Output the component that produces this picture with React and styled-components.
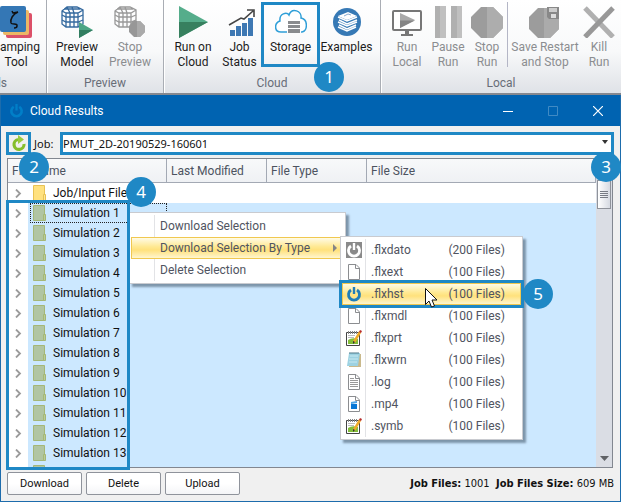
import styled, { createGlobalStyle, css } from "styled-components";

const GlobalStyles = createGlobalStyle`
  * {
    box-sizing: border-box;
  }

  body {
    margin: 0;
    overflow: hidden;
    font-family: Roboto, "Noto Sans", sans-serif;
    font-size: 12px;
    color: #111;
  }

  button, select {
    font-family: inherit;
    font-size: inherit;
    color: inherit;
  }
`;

const Page = styled.div`
  display: flex;
  flex-direction: column;
  height: 100vh;
`;

/* Ribbon */

const Ribbon = styled.header`
  display: flex;
  flex: none;
  height: 95px;
  border-bottom: 2px solid #85888f;
  background: linear-gradient(#ffffff, #f8f9fa 55%, #dfe2e7);
`;

const Group = styled.section`
  display: flex;
  flex-direction: column;
  flex: ${(props) => (props.$grow ? "1" : "none")};
  width: ${(props) => props.$width};
  overflow: ${(props) => (props.$clip ? "hidden" : "visible")};
  border-right: ${(props) => (props.$grow ? "none" : "1px solid #a9adb4")};
  box-shadow: ${(props) => (props.$grow ? "none" : "1px 0 #fff")};
`;

const Tools = styled.div`
  display: flex;
  height: 74px;
  padding-top: 2px;
  padding-left: ${(props) => props.$start || "4px"};
  margin-left: ${(props) => (props.$clip ? "-14px" : "0")};
`;

const ToolButton = styled.button`
  position: relative;
  display: flex;
  flex-direction: column;
  align-items: center;
  flex: none;
  width: ${(props) => props.$width};
  height: 65px;
  padding: 4px 0 0;
  border: none;
  background: none;
  line-height: 15px;
  white-space: nowrap;
  color: ${(props) => (props.disabled ? "#8b8d90" : "#1c1c1c")};
  outline: ${(props) => (props.$marked ? "3px solid #1f88c5" : "none")};
  outline-offset: -3px;

  svg {
    flex: none;
    margin-bottom: 2px;
  }
`;

const ToolDivider = styled.div`
  width: 1px;
  height: 65px;
  background-color: #b4b6c6;
`;

const GroupLabel = styled.div`
  display: flex;
  justify-content: ${(props) => (props.$inset ? "flex-end" : "center")};
  padding-right: ${(props) => props.$inset || "0"};
  line-height: 18px;
  color: #686d78;
`;

/* Dialog window */

const Dialog = styled.main`
  display: flex;
  flex-direction: column;
  flex: 1;
  min-height: 0;
  border: 1px solid #1d6cac;
  border-top: none;
  background-color: #f0f0f0;
`;

const TitleBar = styled.div`
  display: flex;
  align-items: center;
  flex: none;
  height: 31px;
  padding-left: 8px;
  background-color: #0063b1;
  color: #fff;
`;

const Title = styled.h1`
  flex: 1;
  margin: 0 0 0 6px;
  font-size: 12px;
  font-weight: 400;
`;

const WindowButton = styled.button`
  display: grid;
  place-items: center;
  width: 45px;
  height: 31px;
  padding: 0;
  border: none;
  background: none;
  opacity: ${(props) => (props.disabled ? "0.25" : "1")};
`;

const JobBar = styled.div`
  display: flex;
  align-items: center;
  flex: none;
  padding: 6px 6px 3px 5px;
  font-family: "Noto Sans", sans-serif;
  font-size: 11px;
`;

const RefreshButton = styled.button`
  position: relative;
  display: grid;
  place-items: center;
  width: 25px;
  height: 23px;
  padding: 0;
  border: 3px solid #1f88c5;
  background: none;
`;

const JobLabel = styled.label`
  width: 29px;
  padding-left: 3px;
  white-space: nowrap;
`;

const SelectWrap = styled.div`
  position: relative;
  display: flex;
  flex: 1;
`;

const JobSelect = styled.select`
  appearance: none;
  width: 100%;
  height: 23px;
  padding: 0;
  border: 3px solid #1f88c5;
  border-radius: 0;
  background-color: #fff;
`;

const SelectArrow = styled.svg`
  position: absolute;
  top: 8px;
  right: 6px;
  pointer-events: none;
`;

/* Results table */

const PanelWrap = styled.div`
  position: relative;
  flex: 1;
  min-height: 0;
  margin: 0 7px 0 6px;
`;

const Panel = styled.div`
  display: flex;
  height: 100%;
  overflow: hidden;
  border: 1px solid #828790;
  background-color: #fff;
`;

const TableArea = styled.div`
  flex: 1;
  overflow: hidden;
`;

const Table = styled.table`
  width: 100%;
  table-layout: fixed;
  border-collapse: separate;
  border-spacing: 0;
`;

const HeadCell = styled.th`
  width: ${(props) => props.$width};
  height: 24px;
  padding: 0 0 0 4px;
  border-right: 1px solid #a3a9b4;
  border-bottom: 1px solid #a3a9b4;
  background: linear-gradient(#f8f9fa, #eff1f4);
  font-weight: 400;
  text-align: left;
  color: #4c5360;
`;

const Cell = styled.td`
  height: 20px;
  padding: 0;
  background-color: ${(props) => (props.$selected ? "#cce8ff" : "#fff")};
`;

const NameCell = styled.div`
  display: flex;
  align-items: center;
  height: 20px;
`;

const Expander = styled.button`
  display: grid;
  place-items: center;
  width: 20px;
  height: 20px;
  padding: 0;
  border: none;
  background-color: #fff;
`;

const Entry = styled.span`
  display: flex;
  align-items: center;
  gap: 7px;
  flex: 1;
  height: 20px;
  margin-left: 2px;
  padding-left: 2px;
  border: 1px ${(props) => (props.$focused ? "dotted #222" : "solid transparent")};
  line-height: 18px;
  white-space: nowrap;
`;

const Scrollbar = styled.div`
  display: flex;
  flex-direction: column;
  flex: none;
  width: 16px;
  padding: 0 1px 0 1px;
  background-color: #dadde4;
`;

const Thumb = styled.div`
  display: grid;
  place-items: center;
  height: 29px;
  margin-top: 21px;
  border: 1px solid #8f939b;
  background: linear-gradient(90deg, #fff, #d6dae2);
`;

const ScrollDown = styled.button`
  display: grid;
  place-items: center;
  height: 18px;
  margin-top: auto;
  padding: 0;
  border: none;
  background: none;
`;

/* Menus lie over the table */

const Menu = styled.ul`
  position: absolute;
  margin: 0;
  padding: 2px 1px;
  list-style: none;
  border: 1px solid #c9cbd0;
  background-color: #fff;
  box-shadow: 3px 3px 2px rgba(60, 80, 100, 0.55);
`;

const ContextMenu = styled(Menu)`
  top: 54px;
  left: 122px;
  width: 217px;
`;

const SubMenu = styled(Menu)`
  top: 78px;
  left: 333px;
  width: 183px;
`;

const highlight = css`
  border-color: #f0c850;
  background: linear-gradient(#fffbe6, #ffe88f 45%, #ffe17c 60%, #fff6cf);
`;

const MenuItem = styled.button`
  position: relative;
  display: flex;
  align-items: center;
  width: 100%;
  height: 22px;
  padding: 0 15px 0 0;
  border: 1px solid transparent;
  background: none;
  color: #505461;
  white-space: nowrap;
  ${(props) => props.$active && highlight}
  ${(props) =>
    props.$marked &&
    css`
      outline: 3px solid #1f88c5;
      z-index: 1;
    `}
`;

const MenuIcon = styled.span`
  display: grid;
  place-items: center;
  width: 23px;
  height: 22px;
  margin-right: 5px;
  border-right: 1px solid ${(props) => (props.$bare ? "transparent" : "#e2e3e6")};
`;

const MenuText = styled.span`
  flex: 1;
  text-align: left;
`;

const SubArrow = styled.svg`
  position: absolute;
  right: 5px;
`;

const Pointer = styled.svg`
  position: absolute;
  top: 51px;
  left: 84px;
  z-index: 2;
`;

const TreeMark = styled.div`
  position: absolute;
  top: 42px;
  bottom: -2px;
  left: -1px;
  width: 124px;
  border: 3px solid #1f88c5;
  pointer-events: none;
`;

const Badge = styled.span`
  position: absolute;
  top: ${(props) => props.$top};
  left: ${(props) => props.$left};
  right: ${(props) => props.$right};
  z-index: 3;
  display: grid;
  place-items: center;
  width: 30px;
  height: 30px;
  border-radius: 50%;
  background-color: #1f88c5;
  color: #fff;
  font-family: "Noto Sans", sans-serif;
  font-size: 17px;
  line-height: 30px;
`;

const Footer = styled.footer`
  display: flex;
  align-items: center;
  flex: none;
  gap: 4px;
  padding: 4px 6px 6px 6px;
  font-size: 11px;
`;

const FooterButton = styled.button`
  width: 75px;
  height: 23px;
  padding: 0;
  border: 1px solid #8f939b;
  border-radius: 2px;
  background: linear-gradient(#fff 50%, #f4f5f7);
`;

const Totals = styled.p`
  margin: 0 0 0 auto;
  font-family: "DejaVu Sans Condensed", "DejaVu Sans", sans-serif;
  font-size: 11px;
  white-space: pre;
`;

/* Icons */

const DampingIcon = () => (
  <svg width="32" height="32" viewBox="0 0 32 32">
    <rect x="6" y="7" width="26" height="25" rx="2" fill="#dc5068" />
    <rect x="3" y="4" width="26" height="25" rx="2" fill="#ecb765" />
    <rect width="26" height="26" rx="2" fill="#3477b5" />
    <path
      d="M12 5L13 7L18 6C13 8 10 13 11 17C12 19 18 17 17 20C17 21 16 22 14 22"
      fill="none"
      stroke="#111"
      strokeWidth="1.500"
    />
  </svg>
);

const CageIcon = ({ gray }) => (
  <svg width="32" height="32" viewBox="0 0 32 32">
    <g fill="none" stroke={gray ? "#999" : "#34699e"} strokeWidth="1.3">
      <path d="M1 5L6 1H16L22 4V18L17 21H5L1 18zM1 5L5 7H17L22 4M5 7V21M9 7V21M13 7V21M17 7V21M6 1L9 7M11 1L13 7M3 3H19" />
      <path d="M1 9L5 11H17L22 9M1 14L5 16H17L22 14" />
    </g>
    {gray ? (
      <>
        <path d="M19 15h7l5 5v6l-5 5h-6l-5-5v-6z" fill="#979797" />
        <path d="M23 15h3l5 5v6l-5 5h-3z" fill="#aaa" />
      </>
    ) : (
      <>
        <path d="M18 16L32 24L18 32z" fill="#4ba585" />
        <path d="M18 24H32L18 32z" fill="#317d60" />
      </>
    )}
  </svg>
);

const RunIcon = () => (
  <svg width="32" height="32" viewBox="0 0 32 32">
    <path d="M2 0L31 16L2 32z" fill="#55ad8b" />
    <path d="M2 16H31L2 32z" fill="#37805f" />
  </svg>
);

const StatusIcon = () => (
  <svg width="32" height="32" viewBox="0 0 32 32">
    <path d="M6 24h5v6H6zM12 20h5v10h-5zM18 17h5v13h-5zM24 12h5v18h-5z" fill="#3e78b3" />
    <path d="M5 19L17 12L20 13L29 5M23 4h7v7" fill="none" stroke="#454545" strokeWidth="1.6" />
  </svg>
);

const StorageIcon = () => (
  <svg width="32" height="32" viewBox="0 0 32 32">
    <path
      d="M12 26H6C-1 26-1 17 5 15C4 7 12 6 14 9C17 1 27 5 26 12C33 13 33 25 27 26H26"
      fill="#fff"
      stroke="#2f9fd8"
      strokeWidth="1.5"
    />
    <path d="M13 15h12v3H13zM13 19h12v3H13zM13 23h12v4H13z" fill="#898b8e" />
  </svg>
);

const ExamplesIcon = () => (
  <svg width="32" height="32" viewBox="0 0 32 32">
    <circle cx="16" cy="16" r="14" fill="#3679b5" />
    <path d="M7 10L17 6L26 10L16 14z" fill="#fff" />
    <path
      d="M7 11L16 15L26 11M8 14L16 18L26 14M7 16L16 20L26 16M8 19L16 23L25 19M7 21L16 25L25 21"
      fill="none"
      stroke="#fff"
      strokeWidth="1.4"
    />
    <path d="M13 10L17 8L20 9" fill="none" stroke="#8aabd0" />
  </svg>
);

const RunLocalIcon = () => (
  <svg width="32" height="32" viewBox="0 0 32 32">
    <rect x="2" y="5" width="28" height="19" rx="1" fill="#fff" stroke="#777" strokeWidth="2" />
    <path d="M14 24h4v4h4v2H10v-2h4z" fill="#777" />
    <path d="M9 7L24 14L9 22z" fill="#aaa" />
    <path d="M9 14.500H24L9 22z" fill="#858585" />
  </svg>
);

const PauseIcon = () => (
  <svg width="32" height="32" viewBox="0 0 32 32">
    <path d="M3 0h11v32H3zM19 0h11v32H19z" fill="#b0b0b0" />
    <path d="M8 0h6v32H8zM25 0h5v32H25z" fill="#c0c0c0" />
  </svg>
);

const StopIcon = () => (
  <svg width="32" height="32" viewBox="0 0 32 32">
    <path d="M10 1h12l10 10v11L22 32H10L0 22V11z" fill="#9c9c9c" />
    <path d="M16 1h6l10 10v11L22 32h-6z" fill="#adadad" />
  </svg>
);

const SaveStopIcon = () => (
  <svg width="32" height="32" viewBox="0 0 32 32">
    <path d="M9 2h11l10 9v12l-9 9H9L0 23V11z" fill="#9c9c9c" />
    <path d="M15 2h5l10 9v12l-9 9h-6z" fill="#ababab" />
    <path d="M18 1h12v12H20l-2-2z" fill="#888" />
    <path d="M20 2h8v4h-8z" fill="#ccc" />
    <path d="M22 8h5v4h-5z" fill="#ddd" />
  </svg>
);

const KillIcon = () => (
  <svg width="32" height="32" viewBox="0 0 32 32">
    <path d="M2 2L30 31" stroke="#b0b0b0" strokeWidth="5" />
    <path d="M30 2L2 31" stroke="#989898" strokeWidth="5" />
  </svg>
);

const PowerIcon = ({ color, tile, size = 16 }) => (
  <svg width={size} height={size} viewBox="0 0 16 16">
    {tile && <rect width="16" height="16" fill="#8a8a8a" />}
    <path d="M5 4A5.500 5.500 0 1 0 11 4" fill="none" stroke={color} strokeWidth="2.800" />
    <path d="M8 1V8" stroke={color} strokeWidth="2.400" />
  </svg>
);

const RefreshIcon = () => (
  <svg width="17" height="17" viewBox="0 0 17 17">
    <path d="M8 4.500A5 5 0 1 0 14 9" fill="none" stroke="#86be2b" strokeWidth="3.200" />
    <path d="M8 0L14 4.500L8 9z" fill="#9acb3e" />
  </svg>
);

const PageIcon = ({ kind }) => (
  <svg width="16" height="16" viewBox="0 0 16 16">
    <path d="M2.500 .5H10L13.500 4V15.500H2.500z" fill="#fff" stroke="#8b8d90" />
    <path d="M9.500 .5V4.500H13.500" fill="none" stroke="#8b8d90" />
    {kind === "log" && <path d="M4 4.500H8M4 6.500H12M4 8.500H12M4 10.500H12M4 12.500H12" stroke="#999" />}
    {kind === "video" && (
      <>
        <path d="M5 8h6v5H5z" fill="#0878d7" />
        <path d="M5 6L11 5V7L5 8z" fill="#50a5e6" />
      </>
    )}
  </svg>
);

const EditIcon = () => (
  <svg width="16" height="16" viewBox="0 0 16 16">
    <path d="M.5 2.500H13.500V15.500H.5z" fill="#fff" stroke="#444" />
    <path d="M2 10Q6 7 12 9V14H2z" fill="#83bd38" />
    <path d="M2 5.500H9M2 7.500H8" stroke="#bbb" />
    <path d="M2.500 1V4M4.500 1V4M6.500 1V4M8.500 1V4M10.500 1V4" stroke="#888" />
    <path d="M14 2L8 12" stroke="#efaa27" strokeWidth="2.500" />
    <path d="M14 0L16 1L15 3L13 2z" fill="#b72b2b" />
    <path d="M7 11L9 12L7 14z" fill="#333" />
  </svg>
);

const NotepadIcon = () => (
  <svg width="16" height="16" viewBox="0 0 16 16">
    <path d="M4 2H15V15H3z" fill="#c9b98c" />
    <path d="M3 1H14L12 14H1z" fill="#9dd2e2" />
    <path d="M4 4H12M3 7H12M3 10H11" stroke="#c8e9f1" />
    <path d="M4 0V2M6 0V2M8 0V2M10 0V2M12 0V2" stroke="#4c7787" />
  </svg>
);

const FolderIcon = ({ selected }) => (
  <svg width="13" height="16" viewBox="0 0 13 16">
    <path d="M.5 .5H11.500V15.500H.5z" fill={selected ? "#b1c5a3" : "#ffe17f"} stroke={selected ? "#a5b777" : "#e8c254"} />
    <path d="M10.500 9.500H12.500V15.500H10.500z" fill={selected ? "#b9cc9a" : "#ffe898"} stroke={selected ? "#a5b777" : "#e8c254"} />
  </svg>
);

const Chevron = () => (
  <svg width="7" height="9" viewBox="0 0 7 9">
    <path d="M1 .5L5 4.500L1 8.500" fill="none" stroke="#9b9b9b" strokeWidth="1.800" />
  </svg>
);

const files = [
  { name: ".flxdato", count: 200, icon: <PowerIcon color="#fff" tile /> },
  { name: ".flxext", count: 100, icon: <PageIcon /> },
  { name: ".flxhst", count: 100, icon: <PowerIcon color="#207eb9" />, active: true },
  { name: ".flxmdl", count: 100, icon: <PageIcon /> },
  { name: ".flxprt", count: 100, icon: <EditIcon /> },
  { name: ".flxwrn", count: 100, icon: <NotepadIcon /> },
  { name: ".log", count: 100, icon: <PageIcon kind="log" /> },
  { name: ".mp4", count: 100, icon: <PageIcon kind="video" /> },
  { name: ".symb", count: 100, icon: <EditIcon /> },
];

const rows = [
  "Job/Input Files",
  ...Array.from({ length: 14 }, (_, i) => `Simulation ${i + 1}`),
];

function Tool({ icon, lines, children, ...rest }) {
  return (
    <ToolButton {...rest}>
      {icon}
      {lines.map((line) => (
        <span key={line}>{line}</span>
      ))}
      {children}
    </ToolButton>
  );
}

function RibbonBar() {
  return (
    <Ribbon>
      <Group $width="47px" $clip>
        <Tools $clip $start="0px">
          <Tool $width="60px" icon={<DampingIcon />} lines={["Damping", "Tool"]} />
        </Tools>
        <GroupLabel $inset="39px">Tools</GroupLabel>
      </Group>
      <Group $width="117px">
        <Tools $start="5px">
          <Tool $width="50px" icon={<CageIcon />} lines={["Preview", "Model"]} />
          <Tool $width="56px" icon={<CageIcon gray />} lines={["Stop", "Preview"]} disabled />
        </Tools>
        <GroupLabel>Preview</GroupLabel>
      </Group>
      <Group $width="217px">
        <Tools>
          <Tool $width="50px" icon={<RunIcon />} lines={["Run on", "Cloud"]} />
          <Tool $width="43px" icon={<StatusIcon />} lines={["Job", "Status"]} />
          <Tool $width="59px" icon={<StorageIcon />} lines={["Storage"]} $marked>
            <Badge $top="60px" $left="53px">1</Badge>
          </Tool>
          <Tool $width="53px" icon={<ExamplesIcon />} lines={["Examples"]} />
        </Tools>
        <GroupLabel>Cloud</GroupLabel>
      </Group>
      <Group $grow>
        <Tools>
          <Tool $width="44px" icon={<RunLocalIcon />} lines={["Run", "Local"]} disabled />
          <Tool $width="38px" icon={<PauseIcon />} lines={["Pause", "Run"]} disabled />
          <Tool $width="40px" icon={<StopIcon />} lines={["Stop", "Run"]} disabled />
          <ToolDivider />
          <Tool $width="74px" icon={<SaveStopIcon />} lines={["Save Restart", "and Stop"]} disabled />
          <Tool $width="34px" icon={<KillIcon />} lines={["Kill", "Run"]} disabled />
        </Tools>
        <GroupLabel>Local</GroupLabel>
      </Group>
    </Ribbon>
  );
}

function ResultsTable() {
  return (
    <Panel>
      <TableArea>
        <Table>
          <thead>
            <tr>
              <HeadCell $width="159px">File Name</HeadCell>
              <HeadCell $width="100px">Last Modified</HeadCell>
              <HeadCell $width="100px">File Type</HeadCell>
              <HeadCell>File Size</HeadCell>
            </tr>
          </thead>
          <tbody>
            {rows.map((name, i) => (
              <tr key={name}>
                <Cell $selected={i > 0}>
                  <NameCell>
                    <Expander aria-label={`Expand ${name}`}>
                      <Chevron />
                    </Expander>
                    <Entry $focused={i === 1}>
                      <FolderIcon selected={i > 0} />
                      {name}
                    </Entry>
                  </NameCell>
                </Cell>
                <Cell $selected={i > 0} />
                <Cell $selected={i > 0} />
                <Cell $selected={i > 0} />
              </tr>
            ))}
          </tbody>
        </Table>
      </TableArea>
      <Scrollbar>
        <Thumb>
          <svg width="8" height="8" viewBox="0 0 8 8">
            <path d="M0 .5H8M0 2.500H8M0 4.500H8M0 6.500H8" stroke="#777b84" />
          </svg>
        </Thumb>
        <ScrollDown aria-label="Scroll down">
          <svg width="9" height="5" viewBox="0 0 9 5">
            <path d="M0 0H9L4.500 5z" fill="#606266" />
          </svg>
        </ScrollDown>
      </Scrollbar>
    </Panel>
  );
}

function Menus() {
  return (
    <>
      <ContextMenu>
        <li>
          <MenuItem>
            <MenuIcon />
            <MenuText>Download Selection</MenuText>
          </MenuItem>
        </li>
        <li>
          <MenuItem $active>
            <MenuIcon $bare />
            <MenuText>Download Selection By Type</MenuText>
            <SubArrow width="5" height="8" viewBox="0 0 5 8">
              <path d="M0 0L4 4L0 8z" fill="#858585" />
            </SubArrow>
          </MenuItem>
        </li>
        <li>
          <MenuItem>
            <MenuIcon />
            <MenuText>Delete Selection</MenuText>
          </MenuItem>
        </li>
      </ContextMenu>
      <SubMenu>
        {files.map((file) => (
          <li key={file.name}>
            <MenuItem $active={file.active} $marked={file.active}>
              <MenuIcon $bare={file.active}>{file.icon}</MenuIcon>
              <MenuText>{file.name}</MenuText>
              <span>({file.count} Files)</span>
              {file.active && <Badge $top="-5px" $right="-33px">5</Badge>}
            </MenuItem>
          </li>
        ))}
        <Pointer as="li" aria-hidden="true">
          <svg width="13" height="20" viewBox="0 0 13 20">
            <path d="M.5 .5V16.500L4 13L6.500 19L9.500 18L7 12H12z" fill="#fff" stroke="#111" />
          </svg>
        </Pointer>
      </SubMenu>
    </>
  );
}

function App() {
  return (
    <Page>
      <GlobalStyles />
      <RibbonBar />
      <Dialog>
        <TitleBar>
          <PowerIcon color="#007fc8" size={15} />
          <Title>Cloud Results</Title>
          <WindowButton aria-label="Minimize">
            <svg width="10" height="10" viewBox="0 0 10 10">
              <path d="M0 5.500H10" stroke="#fff" />
            </svg>
          </WindowButton>
          <WindowButton aria-label="Maximize" disabled>
            <svg width="10" height="10" viewBox="0 0 10 10">
              <path d="M.5 .5H9.500V9.500H.5z" fill="none" stroke="#fff" />
            </svg>
          </WindowButton>
          <WindowButton aria-label="Close">
            <svg width="10" height="10" viewBox="0 0 10 10">
              <path d="M0 0L10 10M10 0L0 10" stroke="#fff" strokeWidth="1.200" />
            </svg>
          </WindowButton>
        </TitleBar>
        <JobBar>
          <RefreshButton aria-label="Refresh">
            <RefreshIcon />
            <Badge $top="17px" $left="10px">2</Badge>
          </RefreshButton>
          <JobLabel htmlFor="job">Job:</JobLabel>
          <SelectWrap>
            <JobSelect id="job">
              <option>PMUT_2D-20190529-160601</option>
            </JobSelect>
            <SelectArrow width="6" height="4" viewBox="0 0 6 4">
              <path d="M0 0H6L3 4z" fill="#333" />
            </SelectArrow>
            <Badge $top="20px" $right="-7px">3</Badge>
          </SelectWrap>
        </JobBar>
        <PanelWrap>
          <ResultsTable />
          <Menus />
          <TreeMark />
          <Badge $top="19px" $left="119px">4</Badge>
        </PanelWrap>
        <Footer>
          <FooterButton>Download</FooterButton>
          <FooterButton>Delete</FooterButton>
          <FooterButton>Upload</FooterButton>
          <Totals>
            <b>Job Files:</b> 1001{"  "}
            <b>Job Files Size:</b> 609 MB
          </Totals>
        </Footer>
      </Dialog>
    </Page>
  );
}

export default App;
